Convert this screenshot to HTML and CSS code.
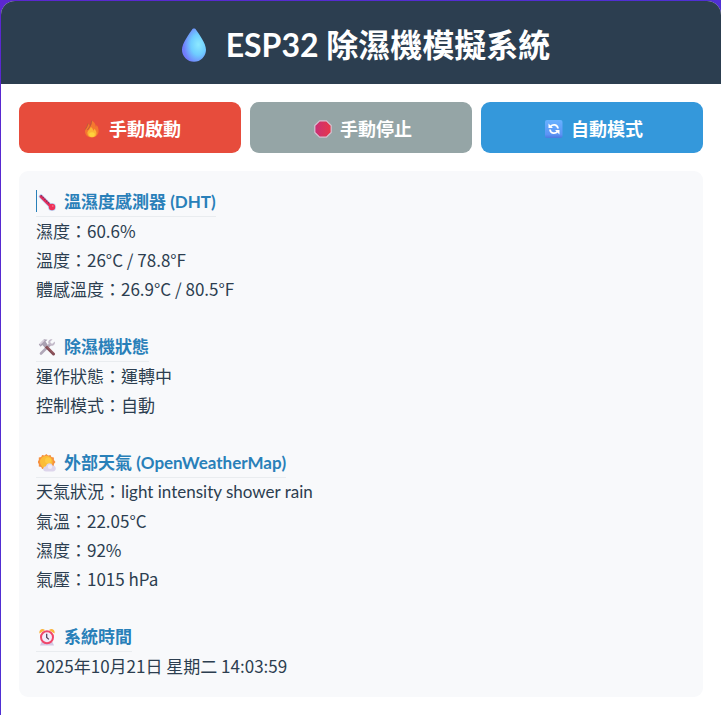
FILE: index.html
```
<!DOCTYPE html>
<html lang="zh-Hant">
<head>
  <meta charset="UTF-8" />
  <meta name="viewport" content="width=device-width, initial-scale=1.0"/>
  <title>ESP32 除濕機模擬系統</title>
  <link rel="stylesheet" href="styles.css">
</head>
<body>
  <div class="container">
    <header class="header">
      <svg class="drop-icon" viewBox="0 0 24 34" aria-hidden="true">
        <defs>
          <radialGradient id="dropFill" cx="0.68" cy="0.48" r="0.62">
            <stop offset="0" stop-color="#8ce9ff"/>
            <stop offset="0.5" stop-color="#6fcdff"/>
            <stop offset="1" stop-color="#717cfb"/>
          </radialGradient>
        </defs>
        <path d="M12 .6c-.9 0-1.6.5-2.2 1.4C7.600 5.500 0 15 0 21.800a12 12 0 0 0 24 0C24 15 16.400 5.500 14.200 2 13.600 1.100 12.900.6 12 .6Z" fill="url(#dropFill)"/>
      </svg>
      <h1>ESP32 除濕機模擬系統</h1>
    </header>

    <main class="content">
      <!-- Control Buttons -->
      <div class="controls">
        <button type="button" class="btn btn-on">
          <svg class="btn-icon" viewBox="0 0 18 18" aria-hidden="true">
            <path d="M8.500 17.500C4.500 17.500 2 14.800 2 11.300c0-3.300 2.600-4.700 3-7.800 1.200.7 1.700 1.700 1.800 2.900C8.500 4.800 8.700 2.600 8.400.5c4 2 4.300 4.800 4.500 6.300.5-.5.7-1.100.7-1.800 1.400 1.700 2 3.800 2 6 0 3.900-3 6.500-7.100 6.500Z" fill="#f4772f"/>
            <path d="M2.300 9.500C3 7.500 4.500 6.500 5 3.500M4.500 10C5.500 8 8.500 6 8.400.5" fill="none" stroke="#b75a3b" stroke-width="1"/>
            <path d="M9 17.300c-2.800 0-4.600-1.700-4.600-4.200 0-2.600 2.700-3.300 3.300-6.100 1.900 1 2.400 2.400 2.400 3.700.8-.5 1.100-1.200 1.200-2 1.500 1.400 2.200 2.900 2.200 4.500 0 2.600-1.800 4.100-4.500 4.100Z" fill="#fbb634"/>
            <ellipse cx="9" cy="14.500" rx="2.800" ry="2.300" fill="#ffd23c"/>
          </svg>
          手動啟動
        </button>
        <button type="button" class="btn btn-off">
          <svg class="btn-icon" viewBox="0 0 18 18" aria-hidden="true">
            <defs>
              <linearGradient id="stopFill">
                <stop offset="0" stop-color="#c92f78"/>
                <stop offset="1" stop-color="#e83748"/>
              </linearGradient>
            </defs>
            <path d="M5.600.8h6.800l4.800 4.800v6.800l-4.800 4.800H5.600L.8 12.400V5.600Z" fill="url(#stopFill)" stroke="#d3c4d2" stroke-width="1.200"/>
          </svg>
          手動停止
        </button>
        <button type="button" class="btn btn-auto">
          <svg class="btn-icon" viewBox="0 0 18 18" aria-hidden="true">
            <defs>
              <linearGradient id="autoFill" x2="0" y2="1">
                <stop offset="0" stop-color="#68b1ff"/>
                <stop offset="0.800" stop-color="#5c94f5"/>
                <stop offset="1" stop-color="#4c78df"/>
              </linearGradient>
            </defs>
            <rect width="17.500" height="18" rx="2" fill="url(#autoFill)"/>
            <path d="M5.500 6.500C7.500 4 12.500 4 13 8.500M12.500 11.500C10.500 14 5.500 14 5 9.500" fill="none" stroke="#fff" stroke-width="1.800"/>
            <path d="M3.500 3.500v4.500H8ZM14.500 14.500V10H10Z" fill="#fff"/>
          </svg>
          自動模式
        </button>
      </div>

      <!-- Status Panel -->
      <div class="panel">
        <section>
          <h2 class="editing">
            <svg class="icon" viewBox="0 0 18 18" aria-hidden="true">
              <path d="M3 3.500 13.500 14" stroke="#b9d5f5" stroke-width="4.500" stroke-linecap="round"/>
              <circle cx="14" cy="14" r="4" fill="#b9d5f5"/>
              <path d="M3 3.500 13.500 14" stroke="#e72e5c" stroke-width="3" stroke-linecap="round"/>
              <circle cx="14" cy="14" r="3.200" fill="#ef3159"/>
              <path d="m3 2.500 8 8" stroke="#713263" stroke-width="1.500" stroke-dasharray="1 1.500"/>
              <circle cx="14.800" cy="13" r=".8" fill="#ff8298"/>
            </svg>
            溫濕度感測器 (DHT)
          </h2>
          <p>濕度：60.6%</p>
          <p>溫度：26°C / 78.8°F</p>
          <p>體感溫度：26.9°C / 80.5°F</p>
        </section>

        <section>
          <h2>
            <svg class="icon" viewBox="0 0 18 18" aria-hidden="true">
              <path d="m3 15.500 9-9" stroke="#b1a8b8" stroke-width="2.600" stroke-linecap="round"/>
              <path d="M16.800 3.500 14 6l-2-2 2.600-2.700C11.500.5 9.500 3 10.500 5.600l2 2c2.900.9 5.100-1.300 4.300-4.100Z" fill="#c3bac9"/>
              <path d="m8 8.500 7.500 7.500" stroke="#834c55" stroke-width="3" stroke-linecap="round"/>
              <path d="m9 8.500 7 7" stroke="#a46568" stroke-width="1"/>
              <path d="M.8 6.500 6 1.200l3.500.6-2 1.800 2.200 3.200-2.800 2.700-2.600-2.400-1.700 1.700Z" fill="#a9a0b1"/>
              <path d="m2 6.300 4.300-4.200" stroke="#ddd5e1" stroke-width="1.200"/>
            </svg>
            除濕機狀態
          </h2>
          <p>運作狀態：運轉中</p>
          <p>控制模式：自動</p>
        </section>

        <section>
          <h2>
            <svg class="icon" viewBox="0 0 18 18" aria-hidden="true">
              <path d="m8.300 0 1.800 1.500 2.400-.6.900 2.200 2.500.5v2.500L17.500 8l-1.600 1.900v2.500l-2.500.5-.9 2.200-2.400-.6L8.300 16l-1.800-1.500-2.400.6-.9-2.200-2.400-.5V9.900L-.5 8 .8 6.100V3.600l2.400-.5.9-2.200 2.400.6Z" fill="#f6913e"/>
              <circle cx="8.300" cy="8" r="6.300" fill="#fbbd38"/>
              <circle cx="10" cy="6.500" r="3" fill="#ffcb43"/>
              <path d="M8 17.500c-3.700 0-3.900-5 0-5.200.4-3.800 5.700-4 6.500-.8 4.200-.3 4.500 6 .3 6Z" fill="#ddd5ec"/>
              <circle cx="12" cy="12.800" r="2.200" fill="#f0ebf8"/>
            </svg>
            外部天氣 (OpenWeatherMap)
          </h2>
          <p class="description">天氣狀況：light intensity shower rain</p>
          <p>氣溫：22.05°C</p>
          <p>濕度：92%</p>
          <p>氣壓：1015 hPa</p>
        </section>

        <section>
          <h2>
            <svg class="icon" viewBox="0 0 18 18" aria-hidden="true">
              <path d="M3.500 14 2 17.500h14L14.500 14Z" fill="#d4c8e4"/>
              <path d="M1.500 5.500C.5 2 4-.5 7 2ZM16.500 5.500C17.500 2 14-.5 11 2Z" fill="#fab43d"/>
              <circle cx="9" cy="9.200" r="6" fill="#f3ebfa" stroke="#f0476b" stroke-width="2"/>
              <path d="M8.700 5.700v3.800l2.200 1.900" fill="none" stroke="#493650" stroke-width="1.200"/>
            </svg>
            系統時間
          </h2>
          <p>2025年10月21日 星期二 14:03:59</p>
        </section>
      </div>
    </main>
  </div>
</body>
</html>
```
FILE: styles.css
```
* {
  box-sizing: border-box;
}
body {
  margin: 0;
  padding: 1px 0 0 1px;
  min-height: 100vh;
  font-family: "Noto Sans CJK TC", sans-serif;
  background: linear-gradient(135deg, #5b27d0, #4338d8);
  color: #2c3e50;
}
h1, h2, .description {
  font-family: Lato, "Noto Sans CJK TC", sans-serif;
}
.container {
  min-height: calc(100vh - 1px);
  background: white;
  border-radius: 14px 14px 0 0;
  overflow: hidden;
}
.header {
  display: flex;
  align-items: center;
  justify-content: center;
  gap: 20px;
  padding: 20px 18px 16px 28px;
  background: #2c3e50;
  color: white;
}
.header h1 {
  margin: 0;
  font-size: 32px;
  line-height: 47px;
}
.drop-icon {
  width: 24px;
  height: 34px;
}
.content {
  padding: 18px;
}
.controls {
  display: grid;
  grid-template-columns: repeat(3, 1fr);
  gap: 9px;
  margin-bottom: 18px;
}
.btn {
  display: flex;
  align-items: center;
  justify-content: center;
  gap: 8px;
  padding: 13px 12px 11px 16px;
  border: none;
  border-radius: 9px;
  color: white;
  font-family: inherit;
  font-size: 18px;
  font-weight: bold;
  line-height: 27px;
  cursor: pointer;
}
.btn-on {
  background: #e74c3c;
}
.btn-off {
  background: #95a5a6;
}
.btn-auto {
  background: #3498db;
}
.btn-icon {
  width: 18px;
  height: 18px;
}
.panel {
  display: flex;
  flex-direction: column;
  gap: 29px;
  padding: 16px 17px 17px;
  border-radius: 9px;
  background: #f8f9fb;
  font-size: 17px;
  line-height: 29px;
}
.panel p {
  margin: 0;
}
.panel h2 {
  position: relative;
  display: flex;
  align-items: center;
  gap: 8px;
  width: fit-content;
  margin: 0 0 -1px;
  padding-left: 2px;
  border-bottom: 1px solid #e9ecef;
  color: #2980b9;
  font-size: 17px;
  font-weight: bold;
}
/* text caret */
.editing::before {
  content: "";
  position: absolute;
  top: 3px;
  left: 0;
  width: 1px;
  height: 22px;
  background: #2980b9;
}
.icon {
  width: 18px;
  height: 18px;
}
```
